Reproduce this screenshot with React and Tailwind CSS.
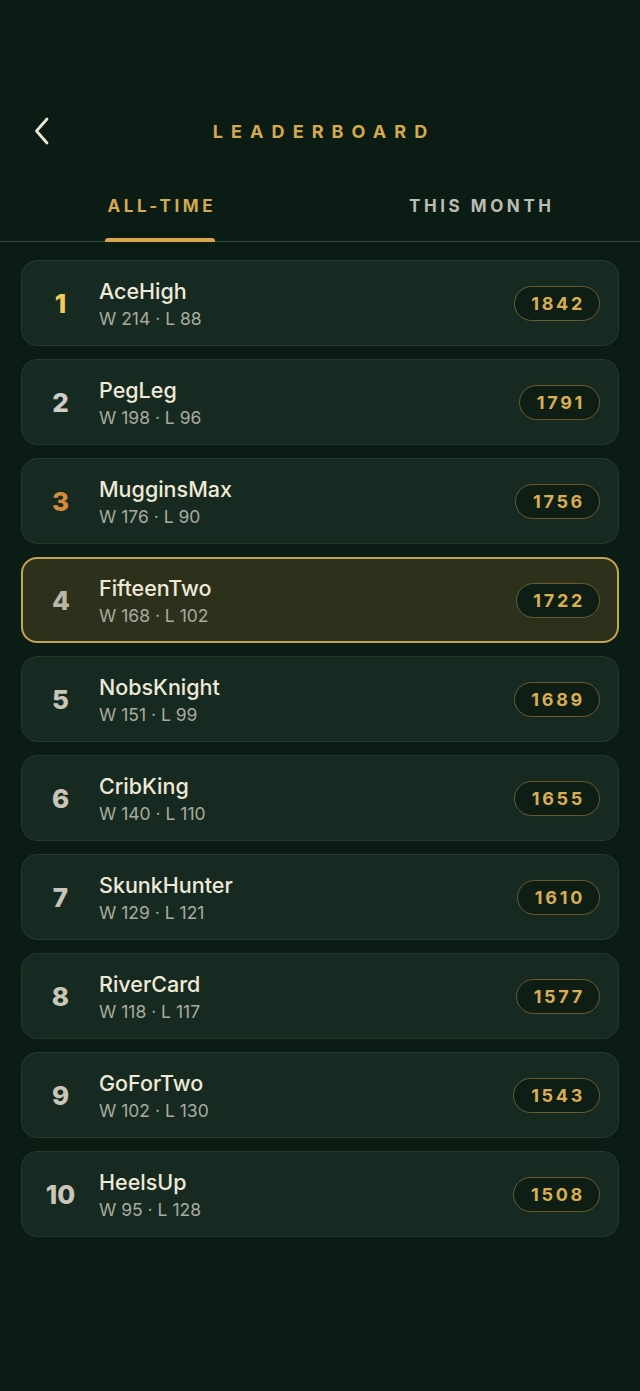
import React from "react";

const rows = [
  { r: 1, name: "AceHigh", w: 214, l: 88, score: 1842, rc: "text-[#f4cb5c]" },
  { r: 2, name: "PegLeg", w: 198, l: 96, score: 1791, rc: "text-[#cfcdc4]" },
  { r: 3, name: "MugginsMax", w: 176, l: 90, score: 1756, rc: "text-[#d68a3c]" },
  { r: 4, name: "FifteenTwo", w: 168, l: 102, score: 1722, rc: "text-[#b9b7a6]", hl: true },
  { r: 5, name: "NobsKnight", w: 151, l: 99, score: 1689, rc: "text-[#c9c6b9]" },
  { r: 6, name: "CribKing", w: 140, l: 110, score: 1655, rc: "text-[#c9c6b9]" },
  { r: 7, name: "SkunkHunter", w: 129, l: 121, score: 1610, rc: "text-[#c9c6b9]" },
  { r: 8, name: "RiverCard", w: 118, l: 117, score: 1577, rc: "text-[#c9c6b9]" },
  { r: 9, name: "GoForTwo", w: 102, l: 130, score: 1543, rc: "text-[#c9c6b9]" },
  { r: 10, name: "HeelsUp", w: 95, l: 128, score: 1508, rc: "text-[#c9c6b9]" },
];

export default function App() {
  return (
    <div
      className="min-h-screen w-full bg-[#0b1c14] pt-[105px] pb-[154px]"
      style={{ fontFamily: "Inter, 'Noto Sans', sans-serif" }}
    >
      {/* Header */}
      <div className="flex h-[52px] items-center px-[30px]">
        <div className="flex h-[40px] w-[24px] items-center justify-center">
          <svg width="18" height="28" viewBox="0 0 18 28" fill="none">
            <polyline
              points="14,2 3.5,14 14,26"
              stroke="#ede6d3"
              strokeWidth="2.8"
              strokeLinecap="round"
              strokeLinejoin="round"
            />
          </svg>
        </div>
        <div className="flex-1 text-center">
          <span className="pl-[0.45em] text-[18px] font-bold tracking-[0.45em] text-[#d4a94f]">
            LEADERBOARD
          </span>
        </div>
        <div className="w-[24px]" />
      </div>

      {/* Tabs */}
      <div className="flex border-b border-[#3a4742]">
        <div className="flex flex-1 justify-center">
          <div className="relative flex flex-col items-center pt-[39px] pb-[25px]">
            <span className="pl-[0.21em] text-[17px] font-bold leading-[20px] tracking-[0.21em] text-[#d4a94f]">
              ALL-TIME
            </span>
            <div className="absolute bottom-[-1px] left-[1px] right-[1px] h-[4px] rounded-t-[3px] bg-[#d4a94f]" />
          </div>
        </div>
        <div className="flex flex-1 justify-center">
          <div className="flex flex-col items-center pt-[39px] pb-[25px]">
            <span className="pl-[0.21em] text-[17px] font-bold leading-[20px] tracking-[0.21em] text-[#bdbcb2]">
              THIS MONTH
            </span>
          </div>
        </div>
      </div>

      {/* List */}
      <div className="mt-[18px] flex flex-col gap-[13px] px-[21px]">
        {rows.map((row) => (
          <div
            key={row.r}
            className={
              row.hl
                ? "flex h-[86px] items-center rounded-[16px] border-2 border-[#c9a24e] bg-[#2d311c] pr-[17px]"
                : "flex h-[86px] items-center rounded-[16px] border border-[#26392f] bg-[#172a21] pr-[18px]"
            }
          >
            <div className={row.hl ? "w-[76px] text-center" : "w-[77px] text-center"}>
              <span className={"text-[26px] font-extrabold " + row.rc}>{row.r}</span>
            </div>
            <div className="flex flex-1 flex-col">
              <span className="text-[21.5px] font-medium leading-[27px] text-[#efe9d8]">
                {row.name}
              </span>
              <span className="mt-[3px] text-[17.5px] leading-[21px] text-[#a9aa9f]">
                W {row.w} · L {row.l}
              </span>
            </div>
            <div className="flex h-[35px] items-center rounded-full border border-[#6b5b2e] bg-[#0e1e15] px-[14px]">
              <span className="pl-[0.15em] text-[18px] font-bold tracking-[0.15em] text-[#d9ad52]">
                {row.score}
              </span>
            </div>
          </div>
        ))}
      </div>
    </div>
  );
}
